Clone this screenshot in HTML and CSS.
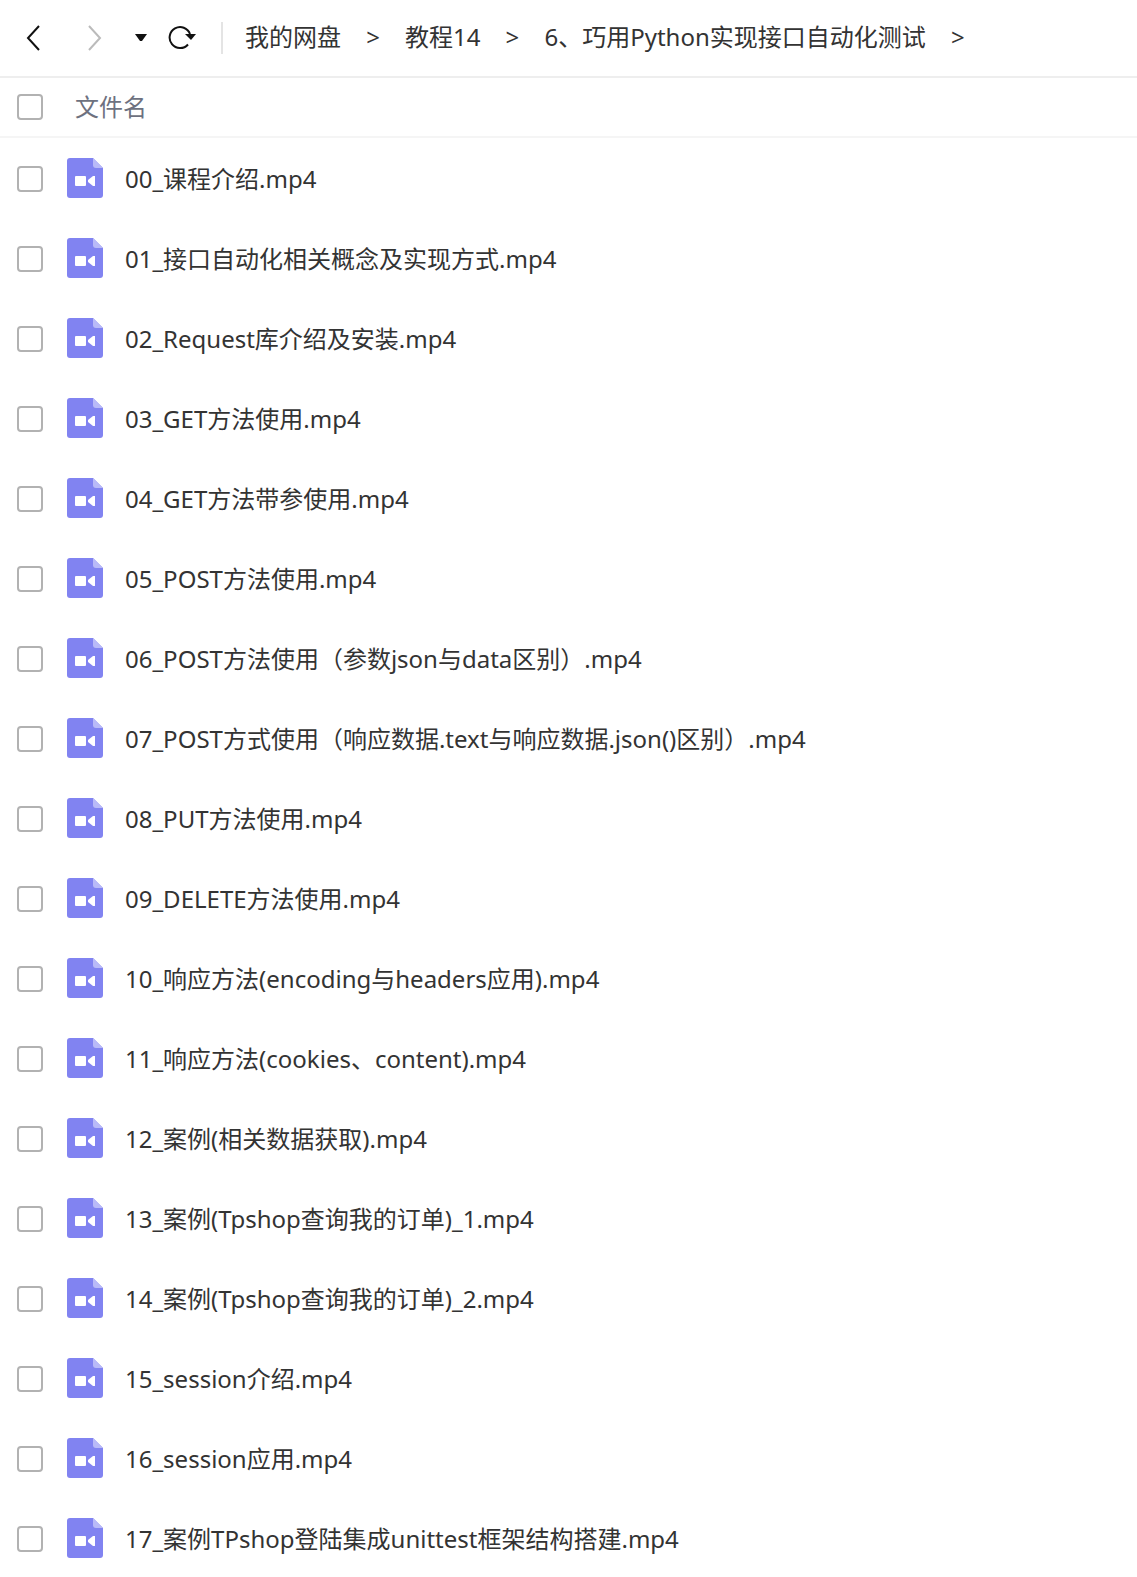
FILE: index.html
```html
<!DOCTYPE html>
<html lang="zh-CN">
  <head>
    <meta charset="utf-8">
    <title>我的网盘</title>
    <link rel="stylesheet" href="styles.css">
  </head>
  <body>
    <svg class="sprite" aria-hidden="true">
      <symbol id="video" viewBox="0 0 36 40">
        <path d="M3 0H26L36 10V37a3 3 0 0 1-3 3H3a3 3 0 0 1-3-3V3a3 3 0 0 1 3-3z" fill="#8183f1"/>
        <path d="M26 0L36 10H29a3 3 0 0 1-3-3z" fill="#b9baf8"/>
        <path d="M9 18h9a1 1 0 0 1 1 1v8a1 1 0 0 1-1 1H9a1 1 0 0 1-1-1v-8a1 1 0 0 1 1-1zM28 18v10h-2l-5-4v-2l5-4z" fill="#fff"/>
      </symbol>
    </svg>
    <header class="toolbar">
      <button class="back" aria-label="后退"><svg width="14" height="26" viewBox="0 0 14 26"><path d="M13 1L2 13L13 25"/></svg></button>
      <button class="forward" aria-label="前进" disabled><svg width="14" height="26" viewBox="0 0 14 26"><path d="M1 1L12 13L1 25"/></svg></button>
      <button class="history" aria-label="历史"><svg width="12" height="8" viewBox="0 0 12 8"><path d="M0 0H12L7 7H5z"/></svg></button>
      <button class="refresh" aria-label="刷新"><svg width="28" height="26" viewBox="0 0 28 26"><path class="arc" d="M20 19.500A10.500 10.500 0 1 1 22 9"/><path class="head" d="M17 9H28L23 15z"/></svg></button>
      <nav class="crumbs">
        <a href="#">我的网盘</a><span>&gt;</span>
        <a href="#">教程14</a><span>&gt;</span>
        <a href="#">6、巧用Python实现接口自动化测试</a><span>&gt;</span>
      </nav>
    </header>
    <table class="files">
      <thead>
        <tr><th class="check"><input type="checkbox" aria-label="全选"></th><th class="title" colspan="2">文件名</th></tr>
      </thead>
      <tbody>
        <tr><td class="check"><input type="checkbox" id="f00"></td><td class="icon"><svg><use href="#video"/></svg></td><td class="name"><label for="f00">00_课程介绍.mp4</label></td></tr>
        <tr><td class="check"><input type="checkbox" id="f01"></td><td class="icon"><svg><use href="#video"/></svg></td><td class="name"><label for="f01">01_接口自动化相关概念及实现方式.mp4</label></td></tr>
        <tr><td class="check"><input type="checkbox" id="f02"></td><td class="icon"><svg><use href="#video"/></svg></td><td class="name"><label for="f02">02_Request库介绍及安装.mp4</label></td></tr>
        <tr><td class="check"><input type="checkbox" id="f03"></td><td class="icon"><svg><use href="#video"/></svg></td><td class="name"><label for="f03">03_GET方法使用.mp4</label></td></tr>
        <tr><td class="check"><input type="checkbox" id="f04"></td><td class="icon"><svg><use href="#video"/></svg></td><td class="name"><label for="f04">04_GET方法带参使用.mp4</label></td></tr>
        <tr><td class="check"><input type="checkbox" id="f05"></td><td class="icon"><svg><use href="#video"/></svg></td><td class="name"><label for="f05">05_POST方法使用.mp4</label></td></tr>
        <tr><td class="check"><input type="checkbox" id="f06"></td><td class="icon"><svg><use href="#video"/></svg></td><td class="name"><label for="f06">06_POST方法使用（参数json与data区别）.mp4</label></td></tr>
        <tr><td class="check"><input type="checkbox" id="f07"></td><td class="icon"><svg><use href="#video"/></svg></td><td class="name"><label for="f07">07_POST方式使用（响应数据.text与响应数据.json()区别）.mp4</label></td></tr>
        <tr><td class="check"><input type="checkbox" id="f08"></td><td class="icon"><svg><use href="#video"/></svg></td><td class="name"><label for="f08">08_PUT方法使用.mp4</label></td></tr>
        <tr><td class="check"><input type="checkbox" id="f09"></td><td class="icon"><svg><use href="#video"/></svg></td><td class="name"><label for="f09">09_DELETE方法使用.mp4</label></td></tr>
        <tr><td class="check"><input type="checkbox" id="f10"></td><td class="icon"><svg><use href="#video"/></svg></td><td class="name"><label for="f10">10_响应方法(encoding与headers应用).mp4</label></td></tr>
        <tr><td class="check"><input type="checkbox" id="f11"></td><td class="icon"><svg><use href="#video"/></svg></td><td class="name"><label for="f11">11_响应方法(cookies、content).mp4</label></td></tr>
        <tr><td class="check"><input type="checkbox" id="f12"></td><td class="icon"><svg><use href="#video"/></svg></td><td class="name"><label for="f12">12_案例(相关数据获取).mp4</label></td></tr>
        <tr><td class="check"><input type="checkbox" id="f13"></td><td class="icon"><svg><use href="#video"/></svg></td><td class="name"><label for="f13">13_案例(Tpshop查询我的订单)_1.mp4</label></td></tr>
        <tr><td class="check"><input type="checkbox" id="f14"></td><td class="icon"><svg><use href="#video"/></svg></td><td class="name"><label for="f14">14_案例(Tpshop查询我的订单)_2.mp4</label></td></tr>
        <tr><td class="check"><input type="checkbox" id="f15"></td><td class="icon"><svg><use href="#video"/></svg></td><td class="name"><label for="f15">15_session介绍.mp4</label></td></tr>
        <tr><td class="check"><input type="checkbox" id="f16"></td><td class="icon"><svg><use href="#video"/></svg></td><td class="name"><label for="f16">16_session应用.mp4</label></td></tr>
        <tr><td class="check"><input type="checkbox" id="f17"></td><td class="icon"><svg><use href="#video"/></svg></td><td class="name"><label for="f17">17_案例TPshop登陆集成unittest框架结构搭建.mp4</label></td></tr>
      </tbody>
    </table>
  </body>
</html>
```
FILE: styles.css
```css
* {
  box-sizing: border-box;
}
body {
  margin: 0;
  background-color: #fff;
  color: #333;
  font-family: "Noto Sans", "Noto Sans CJK SC", sans-serif;
  font-size: 24px;
  line-height: 32px;
}
.sprite {
  display: none;
}
.toolbar {
  display: flex;
  align-items: center;
  height: 78px;
  padding-left: 26px;
  border-bottom: 2px solid #eee;
}
.toolbar button {
  display: flex;
  padding: 0;
  border: none;
  background: none;
  fill: none;
  stroke: #111;
  stroke-width: 2;
}
.toolbar .forward {
  margin-left: 48px;
  stroke: #bbb;
}
.toolbar .history {
  margin-left: 33px;
  fill: #111;
  stroke: none;
}
.toolbar .refresh {
  margin-left: 21px;
}
.refresh .head {
  fill: #111;
  stroke: none;
}
.crumbs {
  display: flex;
  height: 32px;
  margin-left: 25px;
  padding-left: 22px;
  border-left: 2px solid #e4e4e4;
  line-height: 30px;
  white-space: nowrap;
}
.crumbs a {
  color: inherit;
  text-decoration: none;
}
.crumbs span {
  width: 64px;
  text-align: center;
}
.files {
  width: 100%;
  border-spacing: 0;
  white-space: nowrap;
}
.files th, .files td {
  height: 80px;
  padding: 0;
  text-align: left;
  font-weight: normal;
}
.files th {
  height: 60px;
  border-bottom: 2px solid #f5f5f5;
  color: #6d7180;
}
.files tr:last-child td {
  height: 79px;
}
.files .check {
  width: 67px;
  padding-left: 17px;
}
.files .title {
  padding-left: 8px;
}
.files .icon {
  width: 58px;
}
.files td.check, .files .name {
  padding-top: 2px;
}
.icon svg {
  display: block;
  width: 36px;
  height: 40px;
}
.check input {
  appearance: none;
  display: block;
  width: 26px;
  height: 26px;
  margin: 0;
  border: 2px solid #b2b2b2;
  border-radius: 4px;
  background-color: #fff;
}
```
